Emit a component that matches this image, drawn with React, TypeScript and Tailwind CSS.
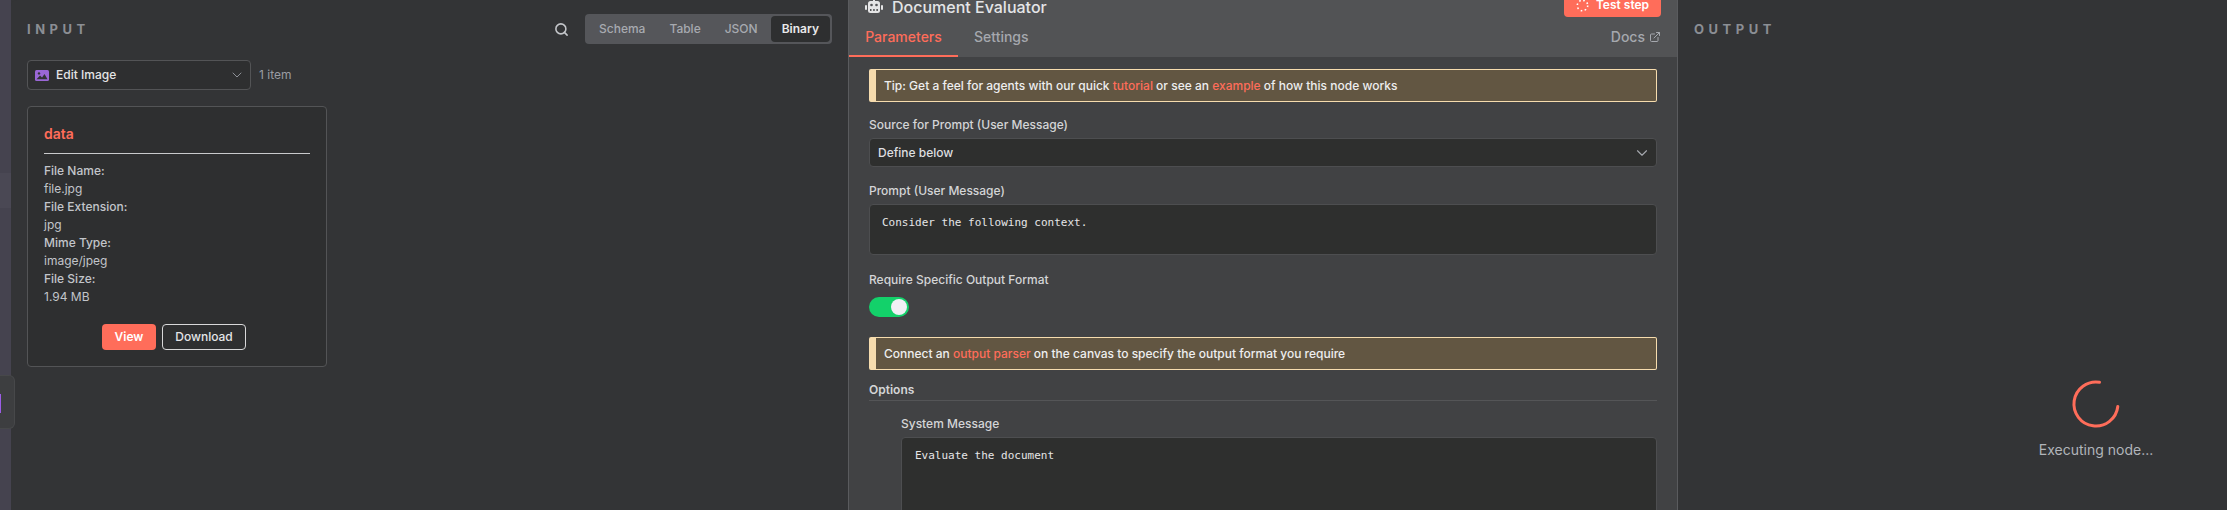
import React from "react";
import { ChevronDown, Search, ExternalLink } from "lucide-react";

function Robot() {
  return (
    <svg width="18" height="16" viewBox="0 0 18 16" fill="#e5e5e6">
      <rect x="3" y="2" width="12" height="12" rx="2.5" />
      <rect x="0" y="6" width="2" height="5" rx="1" />
      <rect x="16" y="6" width="2" height="5" rx="1" />
      <rect x="8" y="0" width="2" height="3" />
      <circle cx="6.5" cy="6" r="1.3" fill="#525355" />
      <circle cx="11.5" cy="6" r="1.3" fill="#525355" />
      <rect x="5" y="10" width="1.5" height="2" fill="#525355" />
      <rect x="8.2" y="10" width="1.5" height="2" fill="#525355" />
      <rect x="11.4" y="10" width="1.5" height="2" fill="#525355" />
    </svg>
  );
}

function ImageIcon() {
  return (
    <svg width="14" height="11" viewBox="0 0 14 11">
      <rect width="14" height="11" rx="1.5" fill="#9a67d6" />
      <circle cx="4" cy="3.4" r="1.2" fill="#333436" />
      <path d="M1.5 9.2 L5 5.5 L7 7.4 L9.5 4 L12.5 9.2 Z" fill="#333436" />
    </svg>
  );
}

function DottedSpinner() {
  return (
    <svg width="13" height="13" viewBox="0 0 13 13" fill="none">
      <circle cx="6.5" cy="6.5" r="5.2" stroke="#ffffff" strokeWidth="1.6" strokeDasharray="1.6 2.5" />
    </svg>
  );
}

function Notice({ children }: { children: React.ReactNode }) {
  return (
    <div className="flex h-[33px] items-center rounded-[2px] border border-[#f6dcae] border-l-[7px] bg-[#625642] pl-[8px] text-[12px] font-medium text-[#eeeeef]">
      <span>{children}</span>
    </div>
  );
}

function Field({ children, className = "" }: { children: React.ReactNode; className?: string }) {
  return <div className={"text-[12px] leading-[16px] font-medium text-[#d4d5d7] " + className}>{children}</div>;
}

const fileRows = [
  ["File Name:", "file.jpg"],
  ["File Extension:", "jpg"],
  ["Mime Type:", "image/jpeg"],
  ["File Size:", "1.94 MB"],
];

export default function App() {
  return (
    <div className="relative flex h-[510px] w-[2227px] overflow-hidden bg-[#333436] font-['Inter',sans-serif]">
      <div className="flex w-[11px] shrink-0 flex-col bg-[#45434f] pt-[173px]">
        <div className="h-[35px] w-full bg-[#4a4854]" />
      </div>

      <section className="flex w-[837px] shrink-0 flex-col rounded-tl-[6px] bg-[#333436] pl-[16px]">
        <div className="flex h-[60px] items-start">
          <h2 className="mt-[21px] text-[13px] leading-[16px] font-bold tracking-[4.5px] text-[#8b8e94]">INPUT</h2>
          <div className="ml-auto mr-[16px] mt-[14px] flex items-center">
            <Search size={15} strokeWidth={2.5} className="mr-[16px] text-[#c4c6ca]" />
            <div className="flex h-[30px] w-[247px] items-center rounded-[4px] bg-[#55565a] pl-[14px] pr-[2px] text-[12px] font-medium text-[#a7aab0]">
              <span>Schema</span>
              <span className="ml-[24px]">Table</span>
              <span className="ml-[24px]">JSON</span>
              <span className="ml-[13px] flex h-[26px] w-[60px] items-center justify-center rounded-[4px] bg-[#2e2f30] font-semibold text-[#e9e9ea]">Binary</span>
            </div>
          </div>
        </div>

        <div className="flex items-center">
          <div className="flex h-[30px] w-[224px] items-center rounded-[4px] border border-[#535456] bg-[#2e2f30] pl-[7px] pr-[5px] text-[12px] font-medium text-[#e4e4e5]">
            <ImageIcon />
            <span className="ml-[7px]">Edit Image</span>
            <ChevronDown size={16} strokeWidth={1.5} className="ml-auto text-[#8d9096]" />
          </div>
          <span className="ml-[8px] text-[12px] text-[#9a9da3]">1 item</span>
        </div>

        <div className="mt-[16px] flex h-[261px] w-[300px] flex-col rounded-[4px] border border-[#535456] bg-[#2e2f30] pl-[16px] pr-[16px] pt-[17px]">
          <div className="text-[14px] leading-[20px] font-semibold text-[#ff6d5a]">data</div>
          <div className="mt-[9px] border-b border-[#c9cacc]" />
          <div className="mt-[8px] text-[12px] leading-[18px] text-[#c2c5ca]">
            {fileRows.map(([k, v]) => (
              <div key={k}>
                <div className="font-medium">{k}</div>
                <div>{v}</div>
              </div>
            ))}
          </div>
          <div className="mt-[18px] flex gap-[6px] pl-[58px]">
            <span className="flex h-[26px] w-[54px] items-center justify-center rounded-[4px] bg-[#ff6d5a] text-[12px] font-semibold text-white">View</span>
            <span className="flex h-[26px] w-[84px] items-center justify-center rounded-[4px] border border-[#d8d8d9] text-[12px] font-medium text-[#e4e5e7]">Download</span>
          </div>
        </div>
      </section>

      <section className="flex w-[830px] shrink-0 flex-col border-x border-[#5a5b5e] bg-[#414244]">
        <div className="h-[57px] shrink-0 bg-[#525355]">
          <div className="flex h-[17px] items-end justify-between pl-[16px] pr-[16px]">
            <div className="flex items-center">
              <Robot />
              <span className="ml-[9px] text-[16px] leading-[20px] font-medium text-[#e4e5e7]">Document Evaluator</span>
            </div>
            <div className="flex h-[24px] w-[97px] items-center justify-center gap-[7px] rounded-[4px] bg-[#ff6d5a] text-[12px] font-semibold text-white">
              <DottedSpinner />
              <span>Test step</span>
            </div>
          </div>
          <div className="flex h-[40px] items-start pr-[16px]">
            <div className="mt-[12px] flex h-[28px] w-[109px] items-start justify-center border-b-2 border-[#ff6d5a] text-[14px] leading-[16px] font-medium text-[#ff6d5a]">Parameters</div>
            <div className="ml-[16px] mt-[12px] text-[14px] leading-[16px] font-medium text-[#a5a8ae]">Settings</div>
            <div className="ml-auto mt-[12px] flex items-center gap-[4px] text-[14px] leading-[16px] font-medium text-[#a5a8ae]">
              <span>Docs</span>
              <ExternalLink size={12} />
            </div>
          </div>
        </div>

        <div className="flex flex-col pl-[20px] pr-[20px] pt-[12px]">
          <Notice>
            Tip: Get a feel for agents with our quick <span className="text-[#ff6d5a]">tutorial</span> or see an <span className="text-[#ff6d5a]">example</span> of how this node works
          </Notice>

          <Field className="mt-[15px]">Source for Prompt (User Message)</Field>
          <div className="mt-[5px] flex h-[29px] items-center justify-between rounded-[4px] border border-[#4d4e50] bg-[#2e2f2e] pl-[8px] pr-[5px] text-[12px] font-medium text-[#dedfe0]">
            <span>Define below</span>
            <ChevronDown size={18} strokeWidth={1.5} className="text-[#a5a8ae]" />
          </div>

          <Field className="mt-[16px]">Prompt (User Message)</Field>
          <div className="mt-[5px] h-[51px] rounded-[4px] border border-[#4d4e50] bg-[#2e2f2e] pl-[12px] pt-[10px] font-['DejaVu_Sans_Mono',monospace] text-[11px] leading-[16px] text-[#e6e6e7]">
            Consider the following context.
          </div>

          <Field className="mt-[17px]">Require Specific Output Format</Field>
          <div className="mt-[9px] flex h-[20px] w-[40px] items-center justify-end rounded-full bg-[#13d16a] pr-[2px]">
            <span className="h-[16px] w-[16px] rounded-full bg-[#f0f0f5]" />
          </div>

          <div className="mt-[20px]">
            <Notice>
              Connect an <span className="text-[#ff6d5a]">output parser</span> on the canvas to specify the output format you require
            </Notice>
          </div>

          <div className="mt-[12px] border-b border-[#545557] pb-[2px] text-[12px] leading-[16px] font-semibold text-[#d4d5d7]">Options</div>

          <div className="mt-[15px] flex flex-col pl-[32px]">
            <Field>System Message</Field>
            <div className="mt-[5px] h-[120px] rounded-[4px] border border-[#4d4e50] bg-[#2e2f2e] pl-[13px] pt-[10px] font-['DejaVu_Sans_Mono',monospace] text-[11px] leading-[16px] text-[#e6e6e7]">
              Evaluate the document
            </div>
          </div>
        </div>
      </section>

      <section className="flex flex-1 flex-col pl-[16px]">
        <h2 className="mt-[21px] text-[13px] leading-[16px] font-bold tracking-[4.5px] text-[#8b8e94]">OUTPUT</h2>
        <div className="ml-[345px] mt-[342px] flex w-[114px] flex-col items-center">
          <svg width="50" height="50" viewBox="0 0 50 50" fill="none">
            <path d="M 28.5 3.3 A 22 22 0 1 0 46.8 27.5" stroke="#ff6d5a" strokeWidth="3" strokeLinecap="round" />
          </svg>
          <div className="mt-[13px] whitespace-nowrap text-[14px] leading-[16px] text-[#b1b4ba]">Executing node...</div>
        </div>
      </section>

      <div className="absolute left-0 top-[375px] h-[54px] w-[15px] rounded-r-[6px] border border-l-0 border-[#47484a] bg-[#3d3e40]">
        <div className="absolute left-0 top-[18px] h-[19px] w-[1px] bg-[#9b5de5]" />
      </div>
    </div>
  );
}
